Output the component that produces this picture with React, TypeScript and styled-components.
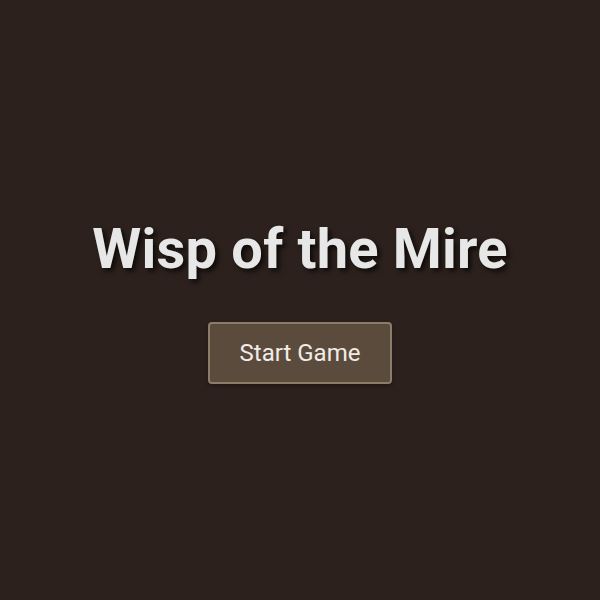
import React from 'react';
import styled, { createGlobalStyle } from 'styled-components';

const GlobalStyle = createGlobalStyle`
	html, body {
		margin: 0;
		padding: 0;
		background: #2c211d;
	}
`;

const Screen = styled.main`
	width: 600px;
	height: 600px;
	display: flex;
	flex-direction: column;
	align-items: center;
	justify-content: center;
	gap: 40px;
	font-family: Roboto, 'Liberation Sans', sans-serif;
`;

const Title = styled.h1`
	margin: 0;
	font-size: 56px;
	font-weight: 700;
	color: #e7e7e7;
	letter-spacing: 0.2px;
	text-shadow: 3px 3px 5px rgba(0, 0, 0, 0.7);
`;

const StartButton = styled.button`
	width: 184px;
	height: 62px;
	background: #5b4b3d;
	border: 2px solid #8c7d69;
	border-radius: 4px;
	color: #f1ece6;
	font-family: inherit;
	font-size: 24px;
	font-weight: 400;
	cursor: pointer;
	box-shadow: 0 2px 4px rgba(0, 0, 0, 0.3);
`;

export default function App() {
	return (
		<>
			<GlobalStyle />
			<Screen>
				<Title>Wisp of the Mire</Title>
				<StartButton>Start Game</StartButton>
			</Screen>
		</>
	);
}
